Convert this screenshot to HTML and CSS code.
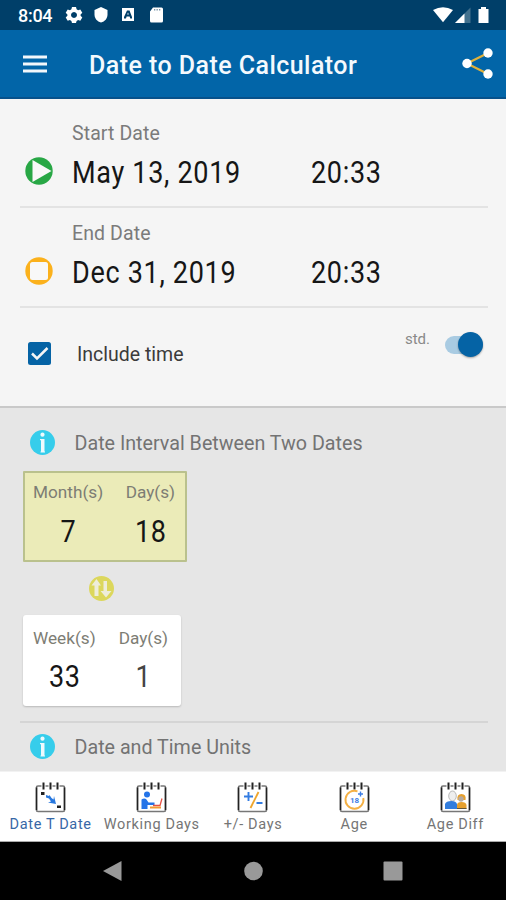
FILE: index.html
```html
<!DOCTYPE html>
<html lang="en">
<head>
<meta charset="utf-8">
<title>Date to Date Calculator</title>
<link rel="stylesheet" href="styles.css">
</head>
<body>
<svg class="defs" width="0" height="0">
  <defs>
    <g id="calendar">
      <rect x="1.500" y="4" width="28" height="25.500" rx="1.500" fill="#fff" stroke="#777" stroke-width="1.700"/>
      <path d="M1.500 5.500v22.500M29.500 5.500v22.500" stroke="#222" stroke-width="1.400"/>
      <path d="M8.500 2.500v3M15.500 2.500v3M22.500 2.500v3" stroke="#fff" stroke-width="4"/>
      <path d="M8.500 0.500v7M15.500 0.500v7M22.500 0.500v7" stroke="#222" stroke-width="2"/>
    </g>
    <g id="info">
      <circle cx="12.500" cy="12.500" r="12.500" fill="#36cdeb"/>
      <circle cx="12.500" cy="4.700" r="2.100" fill="#eefafd"/>
      <path d="M10 9h4.500v12.500h.5v1h-4.500v-1h.5v-11.300h-1z" fill="#eefafd"/>
    </g>
  </defs>
</svg>
<div class="screen">
  <div class="status">
    <span class="clock">8:04</span>
    <svg class="status-left" width="98" height="18" viewBox="0 0 98 18" fill="#fff">
      <path fill-rule="evenodd" d="M6 1h4l.6 2.300 1.500.9 2.200-.7 2 3.300-1.700 1.700v1.300l1.700 1.700-2 3.300-2.200-.7-1.500.9L10 17H6l-.6-2.100-1.500-.9-2.200.7-2-3.200 1.700-1.700V8.400L-.3 6.800l2-3.300 2.200.7 1.500-.9zM8 6a3 3 0 1 0 .01 0z"/>
      <path d="M35 1l6.500 3v4.500c0 4-2.700 7-6.500 8-3.800-1-6.500-4-6.500-8V4z"/>
      <path fill-rule="evenodd" d="M56 2h12v13H56zM58 12.500h2l.6-2h3l.7 2H66v-1.500L63.500 4.500h-2.500L58 11zM61.200 8.500l.8-2 .8 2z"/>
      <path d="M87 1.500h8.500a1.500 1.500 0 0 1 1.500 1.500v12a1.500 1.500 0 0 1-1.500 1.500h-10A1.500 1.500 0 0 1 84 15V5.500z"/>
      <path d="M88 3h1.300v1.500H88zM90.500 3h1.300v1.500h-1.300zM93 3h1.300v1.500H93z" fill="#7893a8"/>
    </svg>
    <svg class="status-right" width="58" height="18" viewBox="0 0 58 18" fill="#fff">
      <path d="M1 4Q11-1.500 21 4L11 16.200z"/>
      <path d="M38.500 1.500V17H23z" fill="#42718e"/>
      <path d="M32.500 7.500V17H23z"/>
      <path d="M49 1h5v2h2.500v14h-10V3H49z"/>
    </svg>
  </div>
  <header class="appbar">
    <svg class="burger" width="24" height="18" viewBox="0 0 24 18"><path d="M0 2h24M0 9h24M0 16h24" stroke="#f2f7fb" stroke-width="3"/></svg>
    <h1 class="title">Date to Date Calculator</h1>
    <svg class="share" width="31" height="31" viewBox="0 0 31 31"><path d="M26 5L5 15.500 26 26" fill="none" stroke="#e0b13b" stroke-width="2.200"/><g fill="#fff"><circle cx="26" cy="5" r="4.700"/><circle cx="5" cy="15.500" r="4.700"/><circle cx="26" cy="26" r="4.700"/></g></svg>
  </header>
  <section class="inputs">
    <div class="entry">
      <div class="label">Start Date</div>
      <div class="values">
        <svg class="mark" width="28" height="28" viewBox="0 0 28 28"><circle cx="14" cy="14" r="13.700" fill="#28a745"/><path d="M7.500 3L26.500 14 7.500 25z" fill="#f8f8f8"/></svg>
        <span class="date"><span class="big">May 13, 2019</span></span>
        <span class="big">20:33</span>
      </div>
    </div>
    <div class="entry">
      <div class="label">End Date</div>
      <div class="values">
        <svg class="mark" width="28" height="28" viewBox="0 0 28 28"><circle cx="14" cy="14" r="13.700" fill="#fbb11c"/><rect x="5" y="5" width="18" height="18" rx="2.500" fill="#f8f8f8"/></svg>
        <span class="date"><span class="big">Dec 31, 2019</span></span>
        <span class="big">20:33</span>
      </div>
    </div>
    <div class="options">
      <svg class="check" width="23" height="23" viewBox="0 0 23 23"><rect width="23" height="23" rx="2.500" fill="#0563a5"/><path d="M4 11.500l5 5L19.500 6" fill="none" stroke="#f5f5f5" stroke-width="2.500"/></svg>
      <span class="include">Include time</span>
      <span class="std">std.</span>
      <span class="switch"><span class="knob"></span></span>
    </div>
  </section>
  <main class="results">
    <div class="heading first"><svg width="25" height="25" viewBox="0 0 25 25"><use href="#info"/></svg><span>Date Interval Between Two Dates</span></div>
    <div class="card months">
      <div class="unit"><span class="name">Month(s)</span><span class="big">7</span></div>
      <div class="unit"><span class="name">Day(s)</span><span class="big">18</span></div>
    </div>
    <svg class="swap" width="25" height="25" viewBox="0 0 25 25"><circle cx="12.500" cy="12.500" r="12.500" fill="#dcd75c"/><path d="M7.500 3L12 9.500H9.500V20h-4V9.500H2.500zM14.500 5h3.500v10h4.500L17 21.500 11.500 15h3z" fill="#eeedda"/></svg>
    <div class="card weeks">
      <div class="unit"><span class="name">Week(s)</span><span class="big">33</span></div>
      <div class="unit"><span class="name">Day(s)</span><span class="big one">1</span></div>
    </div>
    <div class="heading second"><svg width="25" height="25" viewBox="0 0 25 25"><use href="#info"/></svg><span>Date and Time Units</span></div>
  </main>
  <nav class="tabs">
    <div class="tab active">
      <svg width="31" height="31" viewBox="0 0 31 31"><use href="#calendar"/><rect x="6" y="10" width="3.500" height="3" fill="#222"/><rect x="22" y="23.500" width="4" height="2.500" fill="#222"/><path d="M11 13l3 1 .5-1 2 3 2 1.500.5-3.500 2 8-8-1.500 3-1-2-3-3-1z" fill="#2878df"/></svg>
      <span class="tab-name">Date T Date</span>
    </div>
    <div class="tab">
      <svg width="31" height="31" viewBox="0 0 31 31"><use href="#calendar"/><circle cx="11" cy="12.500" r="3" fill="#2474e8"/><path d="M5.500 17.500q3-2 5 0l2 3h6v2.500h-7v4h-6z" fill="#2474e8"/><path d="M17 23.500h7l2-7" fill="none" stroke="#e85145" stroke-width="1.300"/><path d="M14 24.500h11v2H14z" fill="#f29a35"/></svg>
      <span class="tab-name">Working Days</span>
    </div>
    <div class="tab">
      <svg width="31" height="31" viewBox="0 0 31 31"><use href="#calendar"/><path d="M7 14.500h9M11.500 10v9M19.500 21h6" stroke="#337ce2" stroke-width="1.900"/><path d="M21.500 10l-8 16" stroke="#efa62d" stroke-width="1.800"/></svg>
      <span class="tab-name">+/- Days</span>
    </div>
    <div class="tab">
      <svg width="31" height="31" viewBox="0 0 31 31"><use href="#calendar"/><path d="M18.500 9.300A9 9 0 1 0 24.300 16" fill="none" stroke="#f4b044" stroke-width="1.900"/><text class="eighteen" x="15.500" y="20.500" text-anchor="middle">18</text><path d="M19 12h5M21.500 9.500v5" stroke="#3d7de4" stroke-width="1.400"/></svg>
      <span class="tab-name">Age</span>
    </div>
    <div class="tab">
      <svg width="31" height="31" viewBox="0 0 31 31"><use href="#calendar"/><ellipse cx="12.500" cy="14" rx="3.800" ry="5" fill="#eee" stroke="#aaa" stroke-width=".8"/><path d="M17.500 18q-1-6 4-6 5 0 4 6z" fill="#e6a02e"/><circle cx="21" cy="17" r="2.700" fill="#b6aaa0"/><path d="M5 27v-5q1-3 6.500-3 4.500 0 5.500 3v5z" fill="#327ddd"/><path d="M17 27v-4q0-3 4.500-3t5 3v4z" fill="#e6a02e"/><path d="M17 26.500h9.500" stroke="#655637"/></svg>
      <span class="tab-name">Age Diff</span>
    </div>
  </nav>
  <div class="system">
    <svg width="20" height="22" viewBox="0 0 20 22"><path d="M18.500 1v20L0 11z" fill="#999"/></svg>
    <svg width="20" height="22" viewBox="0 0 20 22"><circle cx="10.500" cy="11" r="9.300" fill="#999"/></svg>
    <svg width="20" height="22" viewBox="0 0 20 22"><rect x=".5" y="1.500" width="19" height="19" rx="1" fill="#999"/></svg>
  </div>
</div>
</body>
</html>
```
FILE: styles.css
```css
* { box-sizing: border-box; }
body { margin: 0; background: #000; font-family: Roboto, "Liberation Sans", sans-serif; }
svg { display: block; flex: none; overflow: visible; }
.defs { position: absolute; }
.screen { width: 506px; height: 900px; display: flex; flex-direction: column; overflow: hidden; white-space: nowrap; }
.status { height: 30px; flex: none; background: #003f69; display: flex; align-items: center; padding: 0 16px 0 18px; }
.clock { color: #fff; font-size: 18px; font-weight: 500; width: 48px; line-height: 30px; padding-top: 2px; letter-spacing: -.3px; }
.status-right { margin-left: auto; }
.appbar { height: 69px; flex: none; background: #0265a8; border-bottom: 2px solid #07518b; display: flex; align-items: center; padding: 0 13px 0 23px; }
.title { color: #f4f9fd; margin: 4px 0 0 42px; font-size: 25px; font-weight: 500; line-height: 30px; letter-spacing: .45px; }
.share { margin-left: auto; }
.inputs { height: 309px; flex: none; background: #f5f5f5; padding: 0 18px 0 20px; border-bottom: 2px solid #c9c9c9; }
.entry { height: 100px; border-bottom: 2px solid #e3e3e3; padding-top: 16px; }
.entry:first-child { height: 109px; padding-top: 25px; }
.label { margin-left: 52px; color: #7b7b7b; font-size: 19.500px; line-height: 20px; letter-spacing: .1px; }
.values { display: flex; align-items: center; height: 56px; padding-left: 5px; }
.mark { margin-top: -2px; }
.date { width: 258px; flex: none; padding-left: 19px; }
.big { display: inline-block; color: #161616; font-size: 32px; line-height: 38px; letter-spacing: .8px; transform: scaleX(.845); transform-origin: left center; }
.options { display: flex; height: 90px; align-items: center; padding-left: 8px; }
.include { color: #3b3b3b; font-size: 19.500px; margin-left: 26px; padding-top: 2px; }
.std { color: #898989; font-size: 15px; margin: -29px 1px 0 auto; }
.switch { position: relative; width: 38px; height: 18px; border-radius: 9px; background: #a9cbe2; margin: -16px 5px 0 14px; }
.knob { position: absolute; right: 0; top: -4px; width: 25px; height: 25px; border-radius: 50%; background: #0563a5; box-shadow: 0 1px 2px #0005; }
.results { flex: 1; background: #e6e6e6; padding: 0 18px 0 20px; display: flex; flex-direction: column; align-items: flex-start; }
.heading { display: flex; align-items: center; padding-left: 10px; color: #737373; font-size: 19.700px; width: 468px; }
.heading span { margin-left: 19.500px; padding-top: 2px; }
.first { height: 63px; padding-top: 5px; }
.card { display: flex; margin-left: 3px; border-radius: 3px; }
.months { width: 164px; height: 91px; background: #ebebb8; border: 2px solid #bac18d; padding: 9px 10px 10px 8px; justify-content: space-between; border-radius: 1px; }
.weeks { width: 158px; height: 91px; background: #fff; box-shadow: 0 1px 2px #0003; padding: 13px 13px 12px 10px; justify-content: space-between; }
.unit { display: flex; flex-direction: column; align-items: center; }
.unit .name { color: #7d7d74; font-size: 17.200px; line-height: 20px; }
.unit .big { transform-origin: center; margin-top: 10px; }
.weeks .big { margin-top: 9px; }
.unit .one { color: #444; }
.swap { margin: 14px 0 14px 69px; }
.second { margin-top: 15px; border-top: 2px solid #d5d5d5; height: 49px; }
.tabs { height: 71px; flex: none; background: #fff; display: flex; border-bottom: 1px solid #aaa; border-top: 1px solid #f2f2f2; }
.tab { width: 101.200px; display: flex; flex-direction: column; align-items: center; padding-top: 10px; color: #757575; font-size: 14.500px; }
.tab-name { line-height: 18px; margin-top: 3px; letter-spacing: .65px; }
.active { color: #3767a6; }
.eighteen { font: 700 8px Roboto, sans-serif; fill: #3d7de4; }
.system { height: 58px; flex: none; background: #000; display: flex; justify-content: center; align-items: center; gap: 120px; }
```
